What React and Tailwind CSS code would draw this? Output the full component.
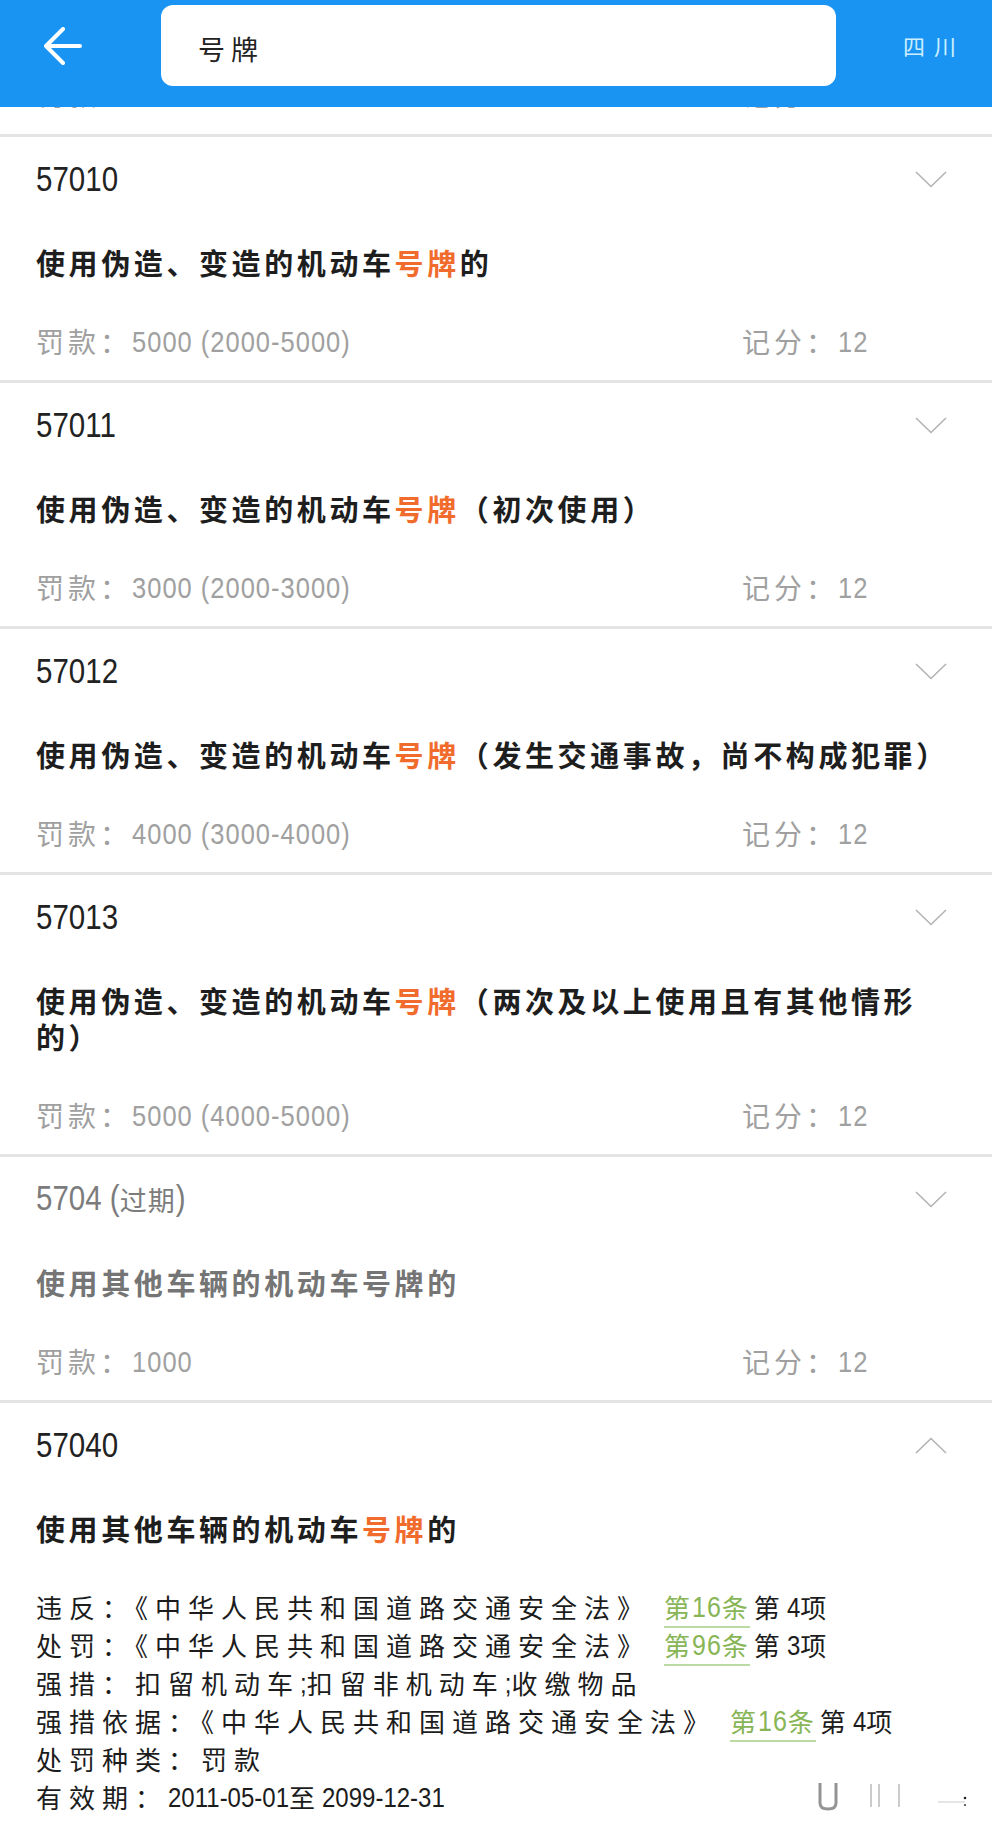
import React from "react";

// latin digits: condensed look via a vertical stretch
const N = ({ children, className = "tracking-normal" }) => (
  <span
    className={`inline-block origin-bottom scale-y-[1.18] leading-none font-['Liberation_Sans',sans-serif] ${className}`}
  >
    {children}
  </span>
);

const Hi = ({ children }) => <span className="text-[#f06b2c]">{children}</span>;

const Law = ({ children }) => (
  <span className="ml-[14px] mr-[4px] border-b-2 border-[#bcdba4] pb-[1px] text-[#88b556] tracking-[2px]">
    {children}
  </span>
);

function Chevron({ up }) {
  return (
    <svg width="32" height="17" viewBox="0 0 32 17" className="mr-[8px]">
      <path
        d={up ? "M1 16 L16 1.5 L31 16" : "M1 1 L16 15.5 L31 1"}
        fill="none"
        stroke="#b3b3b3"
        strokeWidth="1.6"
      />
    </svg>
  );
}

function Fine({ fine }) {
  return (
    <div className="flex h-[36px] text-[28px] leading-[36px] tracking-[4px] text-[#a0a0a0]">
      <div className="w-[706px] shrink-0">
        罚款：<N className="text-[25.5px] tracking-[1px]">{fine}</N>
      </div>
      <div>
        记分：<N className="text-[25.5px] tracking-[1px]">12</N>
      </div>
    </div>
  );
}

function Item({ code, title, fine, expired, open, children }) {
  return (
    <div className="border-t-[3px] border-[#e4e4e4] pl-[36px] pr-[37px] pt-[22px]">
      <div className="flex h-[40px] items-center justify-between">
        <div className={`text-[29.5px] leading-[40px] ${expired ? "text-[#7c7c7c]" : "text-[#222]"}`}>{code}</div>
        <Chevron up={open} />
      </div>
      <div
        className={`mt-[45px] text-[29px] leading-[36px] tracking-[3.6px] font-semibold ${
          expired ? "text-[#757575]" : "text-[#1e1e1e]"
        }`}
      >
        {title}
      </div>
      {open ? (
        children
      ) : (
        <div className="mt-[43px] pb-[21px]">
          <Fine fine={fine} />
        </div>
      )}
    </div>
  );
}

function Watermark() {
  return (
    <svg width="212" height="36" viewBox="0 0 212 36" className="-mr-[15px]">
      <defs>
        <linearGradient id="wl" x1="0" x2="1" y1="0" y2="0">
          <stop offset="0" stopColor="#555" stopOpacity="0.7" />
          <stop offset="0.15" stopColor="#bbb" stopOpacity="0.5" />
          <stop offset="0.85" stopColor="#ccc" stopOpacity="0.5" />
          <stop offset="1" stopColor="#333" stopOpacity="0.9" />
        </linearGradient>
      </defs>
      <path d="M3 19 H207" stroke="url(#wl)" strokeWidth="2" />
      <path d="M180 23 H207" stroke="#ddd" strokeWidth="1.5" />
      <path d="M62 4 V24 Q62 30 70 30 Q78 30 78 24 V4" fill="none" stroke="#666" strokeOpacity="0.7" strokeWidth="3" />
      <path d="M113 5 V28 M121 5 V28 M141 5 V28" stroke="#ccc" strokeWidth="2" />
      <circle cx="207" cy="19" r="1.3" fill="#222" />
      <circle cx="207" cy="26" r="1.1" fill="#444" />
    </svg>
  );
}

export default function App() {
  return (
    <div className="w-[992px] h-[1831px] overflow-hidden bg-white font-['Noto_Sans_CJK_SC',sans-serif] text-[#222]">
      {/* header */}
      <div className="flex h-[107px] bg-[#1a94f2]">
        <div className="mt-[5px] flex h-[81px] w-[161px] items-center pl-[44px]">
          <svg width="38" height="38" viewBox="0 0 38 38">
            <path
              d="M19 2 L2 19 L19 36 M2 19 H36"
              fill="none"
              stroke="#fff"
              strokeWidth="4"
              strokeLinecap="round"
              strokeLinejoin="round"
            />
          </svg>
        </div>
        <div className="mt-[5px] flex h-[81px] w-[675px] items-center rounded-[12px] bg-white pl-[37px] pt-[8px]">
          <span className="text-[27px] tracking-[6px] text-[#222]">号牌</span>
        </div>
        <div className="mt-[5px] flex h-[81px] items-center pl-[67px]">
          <span className="text-[22px] tracking-[9px] text-[#cdeefe]">四川</span>
        </div>
      </div>

      {/* previous row peeking below header */}
      <div className="h-[27px] overflow-hidden pl-[36px] pr-[37px]">
        <div className="-mt-[31px]">
          <Fine fine="5000" />
        </div>
      </div>

      <Item code={<N>57010</N>} fine="5000 (2000-5000)" title={<>使用伪造、变造的机动车<Hi>号牌</Hi>的</>} />
      <Item code={<N>57011</N>} fine="3000 (2000-3000)" title={<>使用伪造、变造的机动车<Hi>号牌</Hi>（初次使用）</>} />
      <Item
        code={<N>57012</N>}
        fine="4000 (3000-4000)"
        title={<>使用伪造、变造的机动车<Hi>号牌</Hi>（发生交通事故，尚不构成犯罪）</>}
      />
      <Item
        code={<N>57013</N>}
        fine="5000 (4000-5000)"
        title={<>使用伪造、变造的机动车<Hi>号牌</Hi>（两次及以上使用且有其他情形的）</>}
      />
      <Item
        code={
          <>
            <N>5704 (</N>
            <span className="text-[27px] tracking-[1px]">过期</span>
            <N>)</N>
          </>
        }
        expired
        fine="1000"
        title="使用其他车辆的机动车号牌的"
      />
      <Item code={<N>57040</N>} open title={<>使用其他车辆的机动车<Hi>号牌</Hi>的</>}>
        <div className="mt-[42px] pb-[15px] text-[26px] leading-[38px] tracking-[7px] text-[#1c1c1c]">
          <div className="h-[38px]">
            违反：《中华人民共和国道路交通安全法》
            <Law>
              第<N className="text-[25px] tracking-[1px]">16</N>条
            </Law>
            第<N className="text-[24px] tracking-normal">4</N>项
          </div>
          <div className="h-[38px]">
            处罚：《中华人民共和国道路交通安全法》
            <Law>
              第<N className="text-[25px] tracking-[1px]">96</N>条
            </Law>
            第<N className="text-[24px] tracking-normal">3</N>项
          </div>
          <div className="h-[38px]">
            强措：扣留机动车<N className="text-[24px] tracking-normal">;</N>扣留非机动车
            <N className="text-[24px] tracking-normal">;</N>收缴物品
          </div>
          <div className="h-[38px]">
            强措依据：《中华人民共和国道路交通安全法》
            <Law>
              第<N className="text-[25px] tracking-[1px]">16</N>条
            </Law>
            第<N className="text-[24px] tracking-normal">4</N>项
          </div>
          <div className="h-[38px]">处罚种类：罚款</div>
          <div className="flex h-[38px] items-center justify-between">
            <div>
              有效期：<N className="text-[24px] tracking-normal">2011-05-01</N>至
              <N className="text-[24px] tracking-normal">2099-12-31</N>
            </div>
            <Watermark />
          </div>
        </div>
      </Item>
    </div>
  );
}
